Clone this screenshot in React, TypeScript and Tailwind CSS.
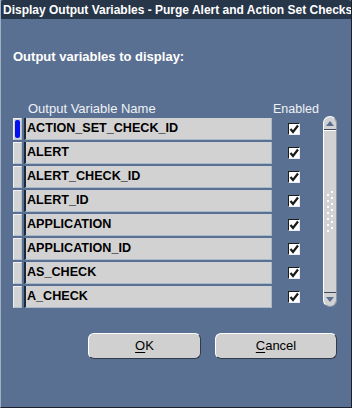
const rows = [
  "ACTION_SET_CHECK_ID",
  "ALERT",
  "ALERT_CHECK_ID",
  "ALERT_ID",
  "APPLICATION",
  "APPLICATION_ID",
  "AS_CHECK",
  "A_CHECK",
];

const CheckBox = () => (
  <div className="w-[12px] h-[12px] bg-white border-t border-l border-[#1c1c1c] border-r border-b border-r-[#e8eef4] border-b-[#e8eef4] flex items-center justify-center">
    <svg width="10" height="10" viewBox="0 0 10 10">
      <path d="M1.5 5 L4 8 L9 1.5" stroke="#1a1a1a" strokeWidth="2.2" fill="none" />
    </svg>
  </div>
);

const ScrollBar = () => (
  <div className="w-[14px] h-[191px] bg-[#d2d2d2] rounded-t-[7px] rounded-b-[7px] border-l border-t border-white border-r border-b border-r-[#8a98a8] border-b-[#8a98a8] flex flex-col">
    {/* up arrow */}
    <div className="h-[13px] flex items-center justify-center border-b border-[#3c4c60]">
      <svg width="8" height="5" viewBox="0 0 8 5">
        <path d="M0 5 L4 0 L8 5 Z" fill="#5a7092" />
      </svg>
    </div>
    <div className="flex-1 flex items-center justify-center border-t border-white">
      <svg width="8" height="42" viewBox="0 0 8 42">
        {[0, 1, 2, 3, 4, 5, 6].map((i) => (
          <g key={i}>
            <rect x="5" y={i * 6} width="2" height="2" fill="#ffffff" />
            <rect x="1" y={i * 6 + 3} width="2" height="2" fill="#ffffff" />
          </g>
        ))}
      </svg>
    </div>
    {/* down arrow */}
    <div className="h-[14px] flex items-center justify-center border-t border-[#3c4c60]">
      <svg width="8" height="5" viewBox="0 0 8 5">
        <path d="M0 0 L8 0 L4 5 Z" fill="#5a7092" />
      </svg>
    </div>
  </div>
);

export default function App() {
  return (
    <div
      className="w-[352px] h-[408px] flex flex-col bg-[#5a7092] border-l border-[#9fb0c6] border-r border-b border-r-[#1a2230] border-b-[#1a2230] overflow-hidden"
      style={{ fontFamily: '"Liberation Sans", Arial, sans-serif' }}
    >
      {/* Title bar */}
      <div className="h-[19px] bg-[#28364a] flex items-center pl-[2px] rounded-t-[3px]">
        <span className="text-white font-bold text-[12px] whitespace-nowrap">
          Display Output Variables - Purge Alert and Action Set Checks
        </span>
      </div>

      <div className="flex flex-col pl-[12px] pt-[31px]">
        <div className="text-white font-bold text-[13px] leading-[14px]">Output variables to display:</div>

        {/* Column headers */}
        <div className="flex mt-[36px] h-[16px] items-end text-[13px] text-[#eef2f6] leading-[14px]">
          <span className="ml-[15px] w-[246px]">Output Variable Name</span>
          <span className="-ml-[1px] text-[12.5px]">Enabled</span>
        </div>

        <div className="flex mt-[1px]">
          <div className="flex flex-col gap-[2px] pt-[1px]">
            {rows.map((name, i) => (
              <div key={name} className="flex items-center h-[22px]">
                <div className="w-[9px] h-[22px] bg-[#d4d4d4] border border-[#b4c0cc] border-l-[#f0f3f6] border-t-[#f0f3f6] flex items-stretch p-[1px]">
                  {i === 0 && <div className="flex-1 bg-[#0010f0] rounded-[2px]" />}
                </div>
                <div className="ml-[2px] w-[248px] h-[22px] bg-[#d2d2d2] border-l-[2px] border-[#1c2838] border-b border-r border-b-[#a9b9ca] border-r-[#a9b9ca] flex items-center pl-[1px]">
                  <span className="text-[12.6px] font-bold text-black leading-none">{name}</span>
                </div>
                <div className="ml-[16px]">
                  <CheckBox />
                </div>
              </div>
            ))}
          </div>
          <div className="ml-[23px] -mt-[1px]">
            <ScrollBar />
          </div>
        </div>

        {/* Buttons */}
        <div className="flex mt-[25px] ml-[75px] gap-[14px]">
          <button className="w-[113px] h-[26px] bg-[#d0d0d0] rounded-[6px] border border-t-white border-l-white border-r-[#303a48] border-b-[#303a48] text-[13px] text-black">
            <span className="underline underline-offset-2">O</span>K
          </button>
          <button className="w-[122px] h-[26px] bg-[#d0d0d0] rounded-[6px] border border-t-white border-l-white border-r-[#303a48] border-b-[#303a48] text-[13px] text-black">
            <span className="underline underline-offset-2">C</span>ancel
          </button>
        </div>
      </div>
    </div>
  );
}
